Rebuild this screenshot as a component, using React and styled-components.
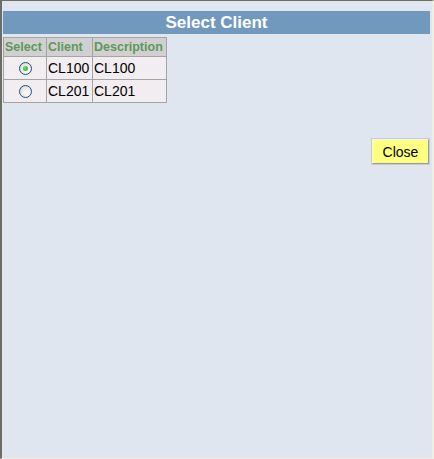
import React, { useState } from "react";
import styled, { createGlobalStyle } from "styled-components";

const Global = createGlobalStyle`
  html, body { margin: 0; padding: 0; height: 100%; }
  body { background: #dfe6f0; font-family: "Liberation Sans", Arial, sans-serif; }
  #root { height: 100%; }
`;

const Frame = styled.div`
  box-sizing: border-box;
  min-height: 100vh;
  border-top: 1px solid #6f6c66;
  border-left: 2px solid #6f6c66;
  border-right: 2px solid #f1efe2;
  border-bottom: 1px solid #f1efe2;
  background: #dfe6f0;
  padding: 10px 2px 0 1px;
`;

const TitleBar = styled.div`
  height: 23px;
  background: #7199be;
  color: #ffffff;
  font-family: "Liberation Sans", Arial, sans-serif;
  font-weight: bold;
  font-size: 17px;
  line-height: 23px;
  text-align: center;
`;

const Grid = styled.table`
  margin-top: 3px;
  border-collapse: collapse;
  border: 1px solid #a4a4a4;
`;

const HeadCell = styled.th`
  box-sizing: content-box;
  width: ${(p) => p.$w}px;
  background: #d0d0d0;
  color: #5f975c;
  font-family: "Liberation Sans", Arial, sans-serif;
  font-weight: bold;
  font-size: 12.5px;
  height: 18px;
  padding: 0 1px;
  border: 1px solid #a4a4a4;
  white-space: nowrap;
  text-align: left;
`;

const Cell = styled.td`
  background: #f1edf1;
  color: #000;
  font-family: "Liberation Sans", Arial, sans-serif;
  font-size: 14px;
  height: 22px;
  padding: 0 1px;
  border: 1px solid #a4a4a4;
  white-space: nowrap;
  text-align: ${(p) => (p.$center ? "center" : "left")};
`;

const Radio = styled.span`
  display: inline-block;
  box-sizing: border-box;
  width: 13px;
  height: 13px;
  border-radius: 50%;
  border: 1px solid #1c5180;
  background: radial-gradient(circle at 65% 65%, #ffffff 0%, #e6e6e0 60%, #cdcdc4 100%);
  position: relative;
  vertical-align: middle;
  margin-top: -1px;
  cursor: pointer;
  &::after {
    content: "";
    position: absolute;
    left: 3px;
    top: 3px;
    width: 5px;
    height: 5px;
    border-radius: 50%;
    background: ${(p) => (p.$checked ? "radial-gradient(circle at 40% 40%, #6fe36f, #21a121)" : "transparent")};
  }
`;

const ButtonRow = styled.div`
  display: flex;
  justify-content: flex-end;
  margin-top: 36px;
`;

const CloseButton = styled.button`
  box-sizing: border-box;
  width: 57px;
  height: 25px;
  background: #ffff80;
  border: 1px solid;
  border-color: #f4f4f4 #9a9a9a #9a9a9a #f4f4f4;
  outline: 1px solid #c8ccd2;
  font-family: "Liberation Sans", Arial, sans-serif;
  font-size: 14px;
  color: #000;
  padding: 0;
  margin-right: 1px;
  cursor: pointer;
`;

const clients = [
  { id: "CL100", desc: "CL100" },
  { id: "CL201", desc: "CL201" },
];

export default function App() {
  const [sel, setSel] = useState("CL100");
  return (
    <>
      <Global />
      <Frame>
        <TitleBar>Select Client</TitleBar>
        <Grid>
          <thead>
            <tr>
              <HeadCell $w={40}>Select</HeadCell>
              <HeadCell $w={43}>Client</HeadCell>
              <HeadCell $w={71}>Description</HeadCell>
            </tr>
          </thead>
          <tbody>
            {clients.map((c) => (
              <tr key={c.id}>
                <Cell $center>
                  <Radio $checked={sel === c.id} onClick={() => setSel(c.id)} />
                </Cell>
                <Cell>{c.id}</Cell>
                <Cell>{c.desc}</Cell>
              </tr>
            ))}
          </tbody>
        </Grid>
        <ButtonRow>
          <CloseButton>Close</CloseButton>
        </ButtonRow>
      </Frame>
    </>
  );
}
